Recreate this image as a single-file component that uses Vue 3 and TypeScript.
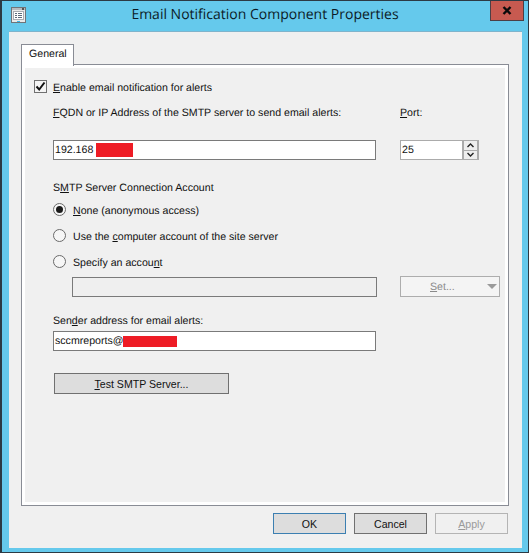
<script setup lang="ts">
const radios = [
  { id: 'none', before: '', key: 'N', after: 'one (anonymous access)', checked: true },
  { id: 'computer', before: 'Use the ', key: 'c', after: 'omputer account of the site server', checked: false },
  { id: 'specify', before: 'Specify an accou', key: 'n', after: 't', checked: false },
]
</script>

<template>
  <div class="window">
    <header class="titlebar">
      <svg class="app-icon" width="15" height="16" viewBox="0 0 15 16">
        <rect x="0.5" y="0.5" width="14" height="15" fill="#e9e9e9" stroke="#6f7479" />
        <rect x="1" y="1" width="13" height="2" fill="#b9bcc0" />
        <rect x="11" y="1" width="2" height="2" fill="#555" />
        <rect x="2.5" y="4.5" width="10" height="8" fill="#fff" stroke="#a9adb2" />
        <path d="M4 6.5h2M7 6.5h4M4 8.5h2M7 8.5h4M4 10.5h2M7 10.5h4" stroke="#5d6b7a" />
        <rect x="6" y="14" width="3" height="1" fill="#3db5e6" />
      </svg>
      <h1 class="title">Email Notification Component Properties</h1>
      <button class="close" type="button">
        <svg width="10" height="9" viewBox="0 0 10 9">
          <path d="M1.5 1 8.5 8M8.5 1 1.5 8" stroke="#0a0a0a" stroke-width="2.4" fill="none" />
        </svg>
      </button>
    </header>

    <main class="client">
      <div class="tabs"><div class="tab">General</div></div>
      <section class="panel">
        <label class="check-row">
          <span class="checkbox">
            <svg width="11" height="11" viewBox="0 0 11 11">
              <path d="M1.5 5.5 4.2 8.5 9.5 1.5" stroke="#111" stroke-width="2" fill="none" />
            </svg>
          </span>
          <span class="nudge"><u>E</u>nable email notification for alerts</span>
        </label>

        <div class="smtp-grid">
          <span class="label nudge"><u>F</u>QDN or IP Address of the SMTP server to send email alerts:</span>
          <span class="label nudge"><u>P</u>ort:</span>
          <div class="input">192.168<i class="redact redact-ip"></i></div>
          <div class="port">
            <div class="port-value">25</div>
            <div class="spin">
              <span class="spin-btn">
                <svg width="7" height="5" viewBox="0 0 7 5"><path d="M0.5 4 3.5 1 6.5 4" stroke="#222" stroke-width="1.4" fill="none" /></svg>
              </span>
              <span class="spin-btn">
                <svg width="7" height="5" viewBox="0 0 7 5"><path d="M0.5 1 3.5 4 6.5 1" stroke="#222" stroke-width="1.4" fill="none" /></svg>
              </span>
            </div>
          </div>
        </div>

        <div class="group-label">S<u>M</u>TP Server Connection Account</div>
        <div class="radios">
          <label v-for="r in radios" :key="r.id" class="radio-row">
            <span class="radio" :class="{ checked: r.checked }"></span>
            <span class="nudge">{{ r.before }}<u>{{ r.key }}</u>{{ r.after }}</span>
          </label>
        </div>

        <div class="account-row">
          <div class="input input-disabled"></div>
          <div class="set-btn">
            <span class="set-text"><u>S</u>et...</span>
            <span class="caret"></span>
          </div>
        </div>

        <div class="sender-label">Sen<u>d</u>er address for email alerts:</div>
        <div class="input sender">sccmreports@<i class="redact redact-mail"></i></div>

        <button class="btn test" type="button"><u>T</u>est SMTP Server...</button>
      </section>

      <footer class="actions">
        <button class="btn action default" type="button">OK</button>
        <button class="btn action" type="button">Cancel</button>
        <button class="btn action disabled" type="button"><u>A</u>pply</button>
      </footer>
    </main>
  </div>
</template>

<style>
html, body { margin: 0; background: #65c9ec; }
</style>

<style scoped>
.window {
  box-sizing: border-box;
  width: 529px;
  height: 553px;
  display: flex;
  flex-direction: column;
  background: #65c9ec;
  border: 1px solid #2c3a44;
  border-left-width: 2px;
  font-family: "Liberation Sans", Arial, sans-serif;
  font-size: 10.6px;
  text-rendering: geometricPrecision;
  color: #111;
  overflow: hidden;
}
u { text-underline-offset: 1px; }
.nudge { padding-top: 2px; }
.titlebar {
  height: 30px;
  flex: none;
  display: grid;
  grid-template-columns: 1fr auto 1fr;
  align-items: start;
}
.app-icon { margin: 6px 0 0 9px; }
.title {
  margin: 0;
  font-family: "Open Sans", sans-serif;
  font-size: 14px;
  font-weight: 400;
  line-height: 28px;
  color: #0c1b27;
  white-space: nowrap;
}
.close {
  justify-self: end;
  width: 34px;
  height: 21px;
  margin: -1px 4px 0 0;
  padding: 0;
  display: flex;
  align-items: center;
  justify-content: center;
  background: #c75a50;
  border: 1px solid #4c3f45;
}
.client {
  flex: 1;
  margin: 0 6px 4px 7px;
  padding: 12px 13px 0 12px;
  background: #f0f0f0;
  border-top: 1px solid #7fb4cc;
  display: flex;
  flex-direction: column;
  min-height: 0;
}
.tabs { display: flex; height: 20px; flex: none; }
.tab {
  box-sizing: border-box;
  width: 53px;
  height: 22px;
  padding-left: 7px;
  line-height: 19px;
  background: #fff;
  border: 1px solid #898c95;
  border-bottom: 0;
  position: relative;
  z-index: 1;
}
.panel {
  box-sizing: border-box;
  height: 442px;
  flex: none;
  padding: 12px 8px 0 12px;
  background: #f0f0f0;
  border: 1px solid #898c95;
  box-shadow: inset 0 0 0 3px #fff;
  display: flex;
  flex-direction: column;
}
.check-row { display: flex; align-items: center; gap: 6px; height: 15px; margin-top: 2px; }
.checkbox {
  box-sizing: border-box;
  width: 13px;
  height: 13px;
  background: #f4f4f4;
  border: 1px solid #707070;
  display: flex;
  align-items: center;
  justify-content: center;
}
.smtp-grid {
  display: grid;
  grid-template-columns: 323px 79px;
  column-gap: 24px;
  row-gap: 21px;
  margin: 10px 0 0 19px;
  grid-template-rows: 15px 20px;
  align-items: center;
}
.label { white-space: nowrap; }
.input {
  box-sizing: border-box;
  height: 20px;
  background: #fff;
  border: 1px solid #7a7a7a;
  padding-left: 1px;
  display: flex;
  align-items: center;
  white-space: nowrap;
}
.redact { display: block; background: #ee1c25; }
.redact-ip { width: 37px; height: 14px; margin-left: 3px; }
.redact-mail { width: 54px; height: 11px; }
.port { display: flex; height: 20px; }
.port-value {
  box-sizing: border-box;
  width: 62px;
  height: 20px;
  background: #fff;
  border: 1px solid #ababab;
  border-right: 0;
  padding-left: 1px;
  line-height: 18px;
}
.spin {
  box-sizing: border-box;
  width: 17px;
  height: 20px;
  padding: 1px 2px;
  background: #ababab;
  display: flex;
  flex-direction: column;
  gap: 1px;
}
.spin-btn {
  flex: 1;
  background: #eeeeee;
  display: flex;
  align-items: center;
  justify-content: center;
}
.group-label { margin: 21px 0 0 19px; height: 15px; line-height: 15px; }
.radios { display: flex; flex-direction: column; gap: 11px; margin: 6px 0 0 19px; }
.radio-row { display: flex; align-items: center; gap: 7px; height: 15px; }
.radio {
  box-sizing: border-box;
  width: 13px;
  height: 13px;
  border-radius: 50%;
  background: #f6f6f6;
  border: 1px solid #6a6a6a;
  position: relative;
}
.radio.checked::after {
  content: "";
  position: absolute;
  inset: 2px;
  border-radius: 50%;
  background: #1a1a1a;
}
.account-row { display: flex; gap: 23px; margin: 7px 0 0 38px; align-items: flex-start; }
.input-disabled { width: 305px; background: #efefef; margin-top: 1px; }
.set-btn {
  box-sizing: border-box;
  width: 100px;
  height: 21px;
  background: #f4f4f4;
  border: 1px solid #adadad;
  color: #8a8a8a;
  display: flex;
  align-items: center;
  position: relative;
}
.set-text { margin-left: 29px; }
.caret {
  position: absolute;
  right: 2px;
  top: 7px;
  border-left: 5px solid transparent;
  border-right: 5px solid transparent;
  border-top: 5px solid #9a9a9a;
}
.sender-label { margin: 17px 0 0 19px; height: 15px; line-height: 15px; }
.sender { width: 323px; margin: 2px 0 0 19px; }
.btn {
  box-sizing: border-box;
  padding: 0;
  font: inherit;
  color: #111;
  background: #dddddd;
  border: 1px solid #707070;
}
.test { width: 175px; height: 21px; margin: 22px 0 0 20px; }
.actions { display: flex; justify-content: flex-end; gap: 8px; margin-top: 7px; padding-right: 1px; }
.action { width: 73px; height: 21px; }
.default { border-color: #3c7fb1; }
.disabled { background: #f0f0f0; border-color: #b4b4b4; color: #9a9a9a; }
</style>
